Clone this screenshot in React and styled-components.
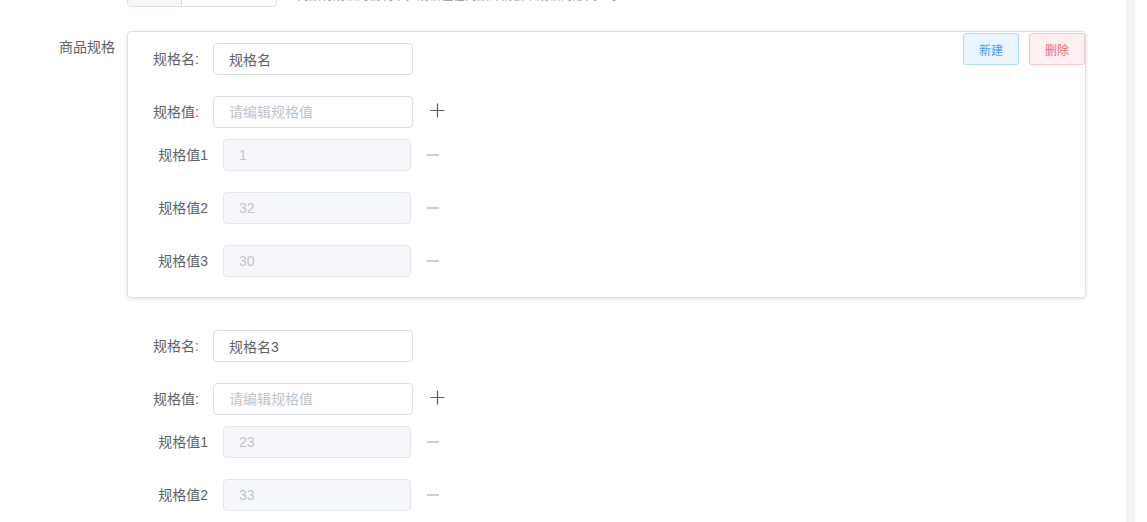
import React from 'react'
import styled, { createGlobalStyle } from 'styled-components';

const GlobalStyle = createGlobalStyle`
  html, body {
    margin: 0;
    padding: 0;
    background: #fff;
    overflow: hidden;
  }
  body {
    font-family: "Liberation Sans", "Noto Sans CJK SC", sans-serif;
    font-size: 14px;
    color: #606266;
  }
`;

const Page = styled.div`
  display: flex;
  height: 522px;
  width: 1147px;
`;

const Main = styled.div`
  flex: 1;
  padding-right: 40px;
`;

const ScrollTrack = styled.div`
  width: 9px;
  margin-right: 12px;
  background: #f4f4f7;
`;

const FormItem = styled.div`
  display: flex;
  align-items: ${p => (p.top ? 'flex-start' : 'center')};
  margin-bottom: ${p => p.gap || 0}px;
  margin-top: ${p => p.offset || 0}px;
`;

const Label = styled.label`
  flex: 0 0 ${p => p.width}px;
  box-sizing: border-box;
  padding-right: ${p => p.pad || 12}px;
  text-align: right;
  line-height: 32px;
  height: 32px;
  font-size: 14px;
  color: #606266;
`;

const InputGroup = styled.div`
  display: flex;
  width: 150px;
  height: 32px;
  box-sizing: border-box;
  border: 1px solid #dcdfe6;
  border-radius: 4px;
  overflow: hidden;
`;

const Prepend = styled.div`
  width: 53px;
  background: #f5f7fa;
  border-right: 1px solid #dcdfe6;
`;

const Hint = styled.span`
  align-self: flex-end;
  margin-left: 20px;
  margin-bottom: 3px;
  font-size: 12px;
  line-height: 16px;
  color: #909399;
  white-space: nowrap;
`;

const SpecList = styled.div`
  flex: 1;
`;

const SpecCard = styled.div`
  position: relative;
  box-sizing: border-box;
  padding: 11px 0 20px;
  margin-bottom: 20px;
  border: 1px solid ${p => (p.active ? '#dcdfe6' : 'transparent')};
  border-radius: 4px;
  box-shadow: ${p => (p.active ? '0 1px 4px rgba(0, 0, 0, 0.12)' : 'none')};
`;

const Actions = styled.div`
  position: absolute;
  top: 1px;
  right: 0;
  display: flex;
  gap: 10px;
`;

const SmallButton = styled.button`
  height: 32px;
  padding: 0 15px;
  font-family: inherit;
  font-size: 12px;
  border-radius: 3px;
  border: 1px solid ${p => (p.danger ? '#fbc4c4' : '#b3d8ff')};
  background: ${p => (p.danger ? '#fef0f0' : '#ecf5ff')};
  color: ${p => (p.danger ? '#f56c6c' : '#409eff')};
  cursor: pointer;
`;

const Row = styled.div`
  display: flex;
  align-items: center;
  margin-bottom: ${p => p.gap || 0}px;
`;

const Input = styled.input`
  width: ${p => p.width || 200}px;
  height: 32px;
  box-sizing: border-box;
  padding: 0 15px;
  font-family: inherit;
  font-size: 14px;
  color: #606266;
  border: 1px solid #dcdfe6;
  border-radius: 4px;
  background: #fff;
  outline: none;

  &::placeholder {
    color: #c0c4cc;
  }

  &:disabled {
    background: #f5f7fa;
    border-color: #e4e7ed;
    color: #c0c4cc;
  }
`;

const IconButton = styled.span`
  display: inline-flex;
  margin-left: ${p => p.offset}px;
  margin-bottom: ${p => p.lift || 0}px;
  cursor: pointer;
`;

const PlusIcon = () => (
  <svg width="15" height="15" viewBox="0 0 15 15">
    <path d="M7.5 0.5v14M0.5 7.5h14" stroke="#5a5c63" strokeWidth="1.2" fill="none" />
  </svg>
);

const MinusIcon = () => (
  <svg width="12" height="2" viewBox="0 0 12 2">
    <path d="M0 1h12" stroke="#a0a3a9" strokeWidth="1" fill="none" />
  </svg>
);

const specs = [
  { name: '规格名', values: ['1', '32', '30'], active: true },
  { name: '规格名3', values: ['23', '33'] },
];

const Spec = ({ spec }) => (
  <SpecCard active={spec.active}>
    {spec.active && (
      <Actions>
        <SmallButton>新建</SmallButton>
        <SmallButton danger>删除</SmallButton>
      </Actions>
    )}
    <Row gap={21}>
      <Label width={85} pad={14}>规格名:</Label>
      <Input defaultValue={spec.name} />
    </Row>
    <Row gap={11}>
      <Label width={85} pad={14}>规格值:</Label>
      <Input placeholder="请编辑规格值" />
      <IconButton offset={17} lift={3}><PlusIcon /></IconButton>
    </Row>
    {spec.values.map((v, i) => (
      <Row key={i} gap={i < spec.values.length - 1 ? 21 : 0}>
        <Label width={95} pad={15}>规格值{i + 1}</Label>
        <Input width={188} value={v} disabled readOnly />
        <IconButton offset={16}><MinusIcon /></IconButton>
      </Row>
    ))}
  </SpecCard>
);

const App = () => {
  return (
    <>
      <GlobalStyle />
      <Page>
        <Main>
          <FormItem offset={-25} gap={24}>
            <Label width={127} />
            <InputGroup>
              <Prepend />
            </InputGroup>
            <Hint>商品有规格的情况下，规格值在商品详情会以规格的形式显示</Hint>
          </FormItem>
          <FormItem top>
            <Label width={127}>商品规格</Label>
            <SpecList>
              {specs.map((s, i) => (
                <Spec key={i} spec={s} />
              ))}
            </SpecList>
          </FormItem>
        </Main>
        <ScrollTrack />
      </Page>
    </>
  );
}

export default App;
